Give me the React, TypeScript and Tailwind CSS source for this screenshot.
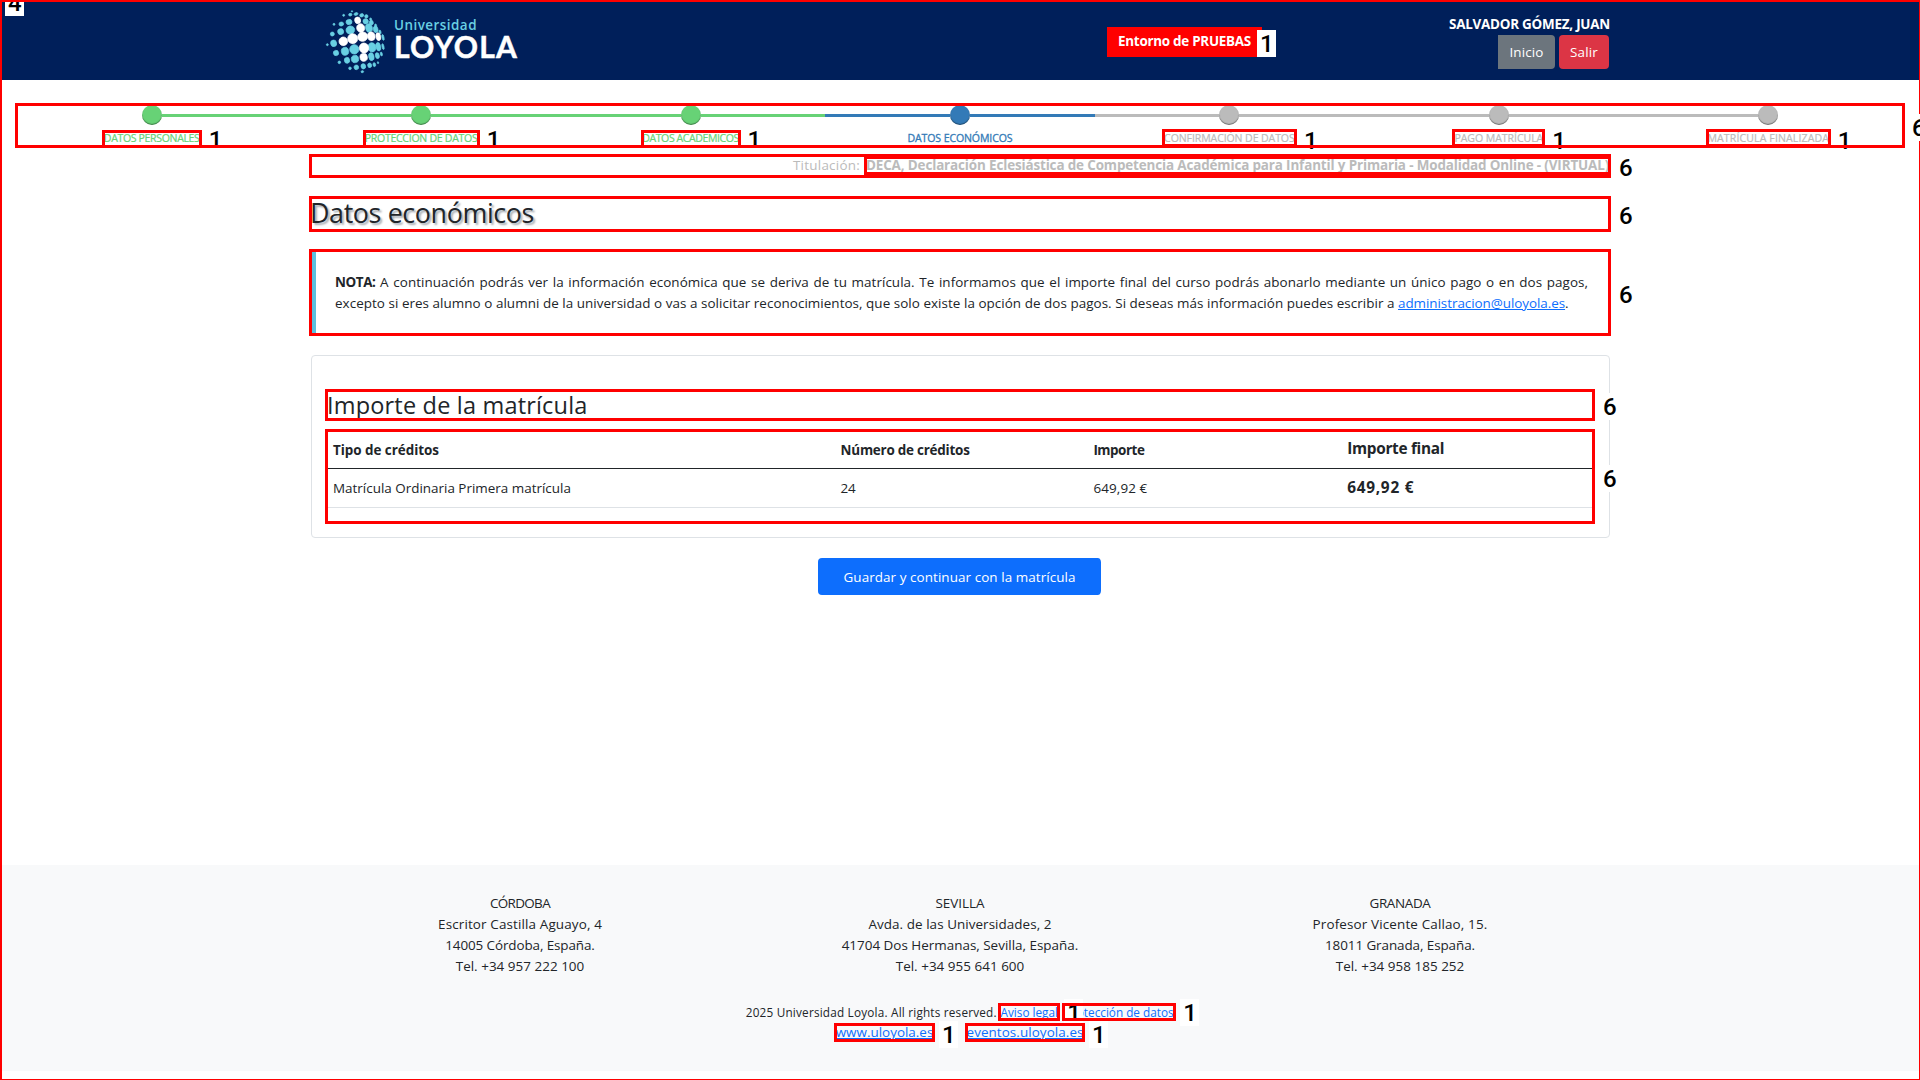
import type { ReactNode } from "react";

function Tag({ value, className = "" }: { value: string; className?: string }) {
  return (
    <span
      className={`absolute z-10 h-[27px] w-[19px] overflow-hidden bg-white pl-[3px] text-left font-['Roboto',sans-serif] text-[24px] leading-[28px] font-medium tracking-normal text-black ${className}`}
    >
      {value}
    </span>
  );
}

type MarkProps = { children?: ReactNode; className?: string; tag?: string; tagClass?: string };

function Mark({ children, className = "", tag, tagClass = "" }: MarkProps) {
  return (
    <div className={`relative shrink-0 ${className}`}>
      {children}
      <span className="pointer-events-none absolute inset-0 z-20 border-[3px] border-[#ff0000]" />
      {tag && (
        <Tag
          value={tag}
          className={`left-full ${tag === "6" ? "ml-[5px] top-[calc(50%-12px)]" : "ml-1 top-[calc(50%-12px)]"} ${tagClass}`}
        />
      )}
    </div>
  );
}

const whiteDots = [
  [113, 49, 9, 10], [122, 72, 12, 13], [70, 112, 13, 13], [98, 104, 15, 15], [128, 98, 15, 14],
  [154, 97, 11, 13], [175, 98, 7, 12], [132, 132, 14, 15], [131, 160, 11, 12],
];
const blueDots = [
  [96, 22, 2, 2], [71, 34, 3, 3], [91, 32, 5, 4], [108, 30, 6, 4], [125, 34, 6, 5], [139, 37, 5, 5], [152, 46, 3, 4],
  [42, 61, 3, 3], [64, 60, 7, 6], [87, 54, 9, 8], [137, 52, 8, 8], [154, 56, 6, 7], [167, 65, 3, 5],
  [37, 90, 6, 6], [62, 83, 9, 9], [91, 78, 13, 12], [147, 72, 10, 13], [167, 76, 7, 10], [180, 84, 3, 6],
  [22, 122, 3, 3], [41, 118, 9, 10], [189, 100, 3, 9],
  [48, 147, 8, 8], [75, 142, 11, 12], [103, 136, 14, 14], [156, 130, 12, 14], [175, 128, 7, 13], [189, 128, 3, 9],
  [58, 175, 4, 4], [81, 169, 8, 9], [105, 165, 11, 11], [154, 158, 8, 12], [172, 155, 6, 9], [184, 150, 3, 6],
  [90, 193, 4, 4], [109, 190, 7, 7], [130, 187, 7, 8], [149, 184, 6, 7], [163, 182, 4, 6], [174, 176, 2, 3],
  [127, 203, 4, 3],
];

function Logo() {
  return (
    <div className="flex h-full items-center">
      <svg width="72" height="72" viewBox="0 0 216 216" className="-ml-1.5 -mt-[1px]">
        {blueDots.map(([x, y, rx, ry]) => (
          <ellipse key={`${x}-${y}`} cx={x} cy={y} rx={rx} ry={ry} fill="#69d0e3" stroke="#69d0e3" strokeWidth="2" transform={`rotate(-12 ${x} ${y})`} />
        ))}
        {whiteDots.map(([x, y, rx, ry]) => (
          <ellipse key={`${x}-${y}`} cx={x} cy={y} rx={rx} ry={ry} fill="#fff" stroke="#fff" strokeWidth="2" transform={`rotate(-12 ${x} ${y})`} />
        ))}
      </svg>
      <div className="ml-[2px] -mt-[3px] whitespace-nowrap">
        <div className="text-[13.44px] leading-[16px] font-semibold tracking-[0.035em] text-[#69d0e3]">Universidad</div>
        <div className="-mt-[2px] font-['Lato',sans-serif] text-[30px] leading-[30px] font-bold tracking-[0.042em] text-white [-webkit-text-stroke:0.5px_white]">LOYOLA</div>
      </div>
    </div>
  );
}

const steps = [
  { label: "DATOS PERSONALES", state: "done", box: "w-[100px] tracking-[-0.026em]" },
  { label: "PROTECCION DE DATOS", state: "done", box: "w-[117px] tracking-[-0.021em]" },
  { label: "DATOS ACADEMICOS", state: "done", box: "w-[100px] tracking-[-0.032em]" },
  { label: "DATOS ECONÓMICOS", state: "current", box: "tracking-[-0.0105em]" },
  { label: "CONFIRMACIÓN DE DATOS", state: "todo", box: "w-[135px] tracking-[-0.0076em]" },
  { label: "PAGO MATRÍCULA", state: "todo", box: "w-[93px] tracking-[-0.0037em]" },
  { label: "MATRÍCULA FINALIZADA", state: "todo", box: "w-[125px] tracking-[0.0088em]" },
];
const fill: Record<string, string> = { done: "bg-[#67d276]", current: "bg-[#337ab7]", todo: "bg-[#bbbbbb]" };
const ink: Record<string, string> = { done: "text-[#67d276]", current: "text-[#337ab7]", todo: "text-[#bbbbbb]" };

function Stepper() {
  return (
    <Mark className="mx-auto mt-[23px] h-[45px] w-[1890px]">
      <div className="flex h-full px-[2px] pt-[2px]">
        {steps.map((s, i) => (
          <div key={s.label} className="flex flex-1 flex-col items-center">
            <div className="flex w-full items-center">
              <span className={`h-[3px] flex-1 ${i === 0 ? "" : fill[s.state]}`} />
              <span className={`size-5 rounded-full shadow-[inset_0_-1px_1px_rgba(0,0,0,0.4)] ${fill[s.state]}`} />
              <span className={`h-[3px] flex-1 ${i === 6 ? "" : fill[s.state]}`} />
            </div>
            {s.state === "current" ? (
              <div className={`mt-1 text-[10.56px] leading-[18px] whitespace-nowrap [-webkit-text-stroke:0.3px] ${ink[s.state]} ${s.box}`}>{s.label}</div>
            ) : (
              <Mark className={`h-[18px] ${s.state === "todo" ? "mt-1" : "mt-[5px]"} ${s.box}`} tag="1" tagClass={s.state === "todo" ? "mt-px" : "-mt-px"}>
                <div className={`flex justify-center text-[10.56px] whitespace-nowrap [-webkit-text-stroke:0.2px] ${s.state === "todo" ? "leading-[18px]" : "leading-[17px]"} ${ink[s.state]}`}>{s.label}</div>
              </Mark>
            )}
          </div>
        ))}
      </div>
    </Mark>
  );
}

const campuses = [
  [["CÓRDOBA", "tracking-[-0.049em]"], ["Escritor Castilla Aguayo, 4", "tracking-[0.01em]"], ["14005 Córdoba, España.", "tracking-[-0.0075em]"], ["Tel. +34 957 222 100", "tracking-[0.002em]"]],
  [["SEVILLA", ""], ["Avda. de las Universidades, 2", "tracking-[0.004em]"], ["41704 Dos Hermanas, Sevilla, España.", ""], ["Tel. +34 955 641 600", "tracking-[0.002em]"]],
  [["GRANADA", "tracking-[-0.026em]"], ["Profesor Vicente Callao, 15.", "tracking-[0.011em]"], ["18011 Granada, España.", "tracking-[-0.006em]"], ["Tel. +34 958 185 252", "tracking-[0.002em]"]],
];

const linkText = "text-[#0d6efd] underline";

export default function App() {
  return (
    <div className="relative flex h-[1080px] w-[1920px] flex-col overflow-hidden bg-white font-['Open_Sans',sans-serif] text-[13.44px] leading-[21px] text-[#212529]">
      <header className="h-20 shrink-0 bg-[#001f5a]">
        <div className="mx-auto flex h-full w-[1300px] pl-4">
          <div className="w-[781px]">
            <Logo />
          </div>
          <div className="relative mt-[27px] h-[30px] w-[155px] bg-[#ff0000] pl-[11px] leading-[28px] font-bold tracking-[-0.0202em] whitespace-nowrap text-white">
            Entorno de PRUEBAS
            <Tag value="1" className="top-[3px] left-[150px]" />
          </div>
          <div className="ml-auto flex flex-col items-end pt-[14px]">
            <div className="font-bold tracking-[-0.0178em] whitespace-nowrap text-white">SALVADOR GÓMEZ, JUAN</div>
            <div className="mr-px flex gap-1 text-white">
              <button className="h-[34px] w-[57px] rounded-r bg-[#6c757d] tracking-[0.009em]">Inicio</button>
              <button className="h-[34px] w-[50px] rounded bg-[#dc3545] tracking-[0.013em]">Salir</button>
            </div>
          </div>
        </div>
      </header>

      <Stepper />

      <main className="mx-auto w-[1302px]">
        <Mark className="mt-1.5 h-6" tag="6">
          <div className="flex justify-end text-[#bbbbbb]">
            <span className="mr-1 mt-px tracking-[0.018em]">Titulación:</span>
            <Mark className="mt-[2px] h-[19px] w-[747px] pl-[2px]">
              <div className="-mt-px font-bold tracking-[-0.0103em] whitespace-nowrap">
                DECA, Declaración Eclesiástica de Competencia Académica para Infantil y Primaria - Modalidad Online - (VIRTUAL)
              </div>
            </Mark>
          </div>
        </Mark>

        <Mark className="mt-[18px] h-9 pl-px" tag="6">
          <h1 className="text-[26.88px] leading-[34px] tracking-[-0.0145em] [text-shadow:2px_2px_2px_#a6acb3]">Datos económicos</h1>
        </Mark>

        <Mark className="mt-[17px] h-[87px] pl-[3px]" tag="6">
          <div className="h-full border-l-4 border-[#5bc0de] pt-[23px] pr-[23px] pl-[19px]">
            <p className="text-justify tracking-[0.0032em]">
              <b className="tracking-[-0.03em]">NOTA:</b> A continuación podrás ver la información económica que se deriva de tu matrícula. Te informamos que el importe
              final del curso podrás abonarlo mediante un único pago o en dos pagos, excepto si eres alumno o alumni de la universidad o vas
              a solicitar reconocimientos, que solo existe la opción de dos pagos. Si deseas más información puedes escribir a{" "}
              <a className={`${linkText} tracking-[-0.004em]`}>administracion@uloyola.es</a>.
            </p>
          </div>
        </Mark>

        <section className="mt-[19px] mr-px ml-[2px] h-[183px] rounded border border-[#dee2e6] px-[13px] pt-[33px]">
          <Mark className="h-8 w-[1270px] pl-[2px]" tag="6">
            <h2 className="text-[23.52px] leading-[32px] tracking-[0.0075em]">Importe de la matrícula</h2>
          </Mark>
          <Mark className="mt-2 h-[95px] w-[1270px] p-[3px]" tag="6">
            <div className="grid h-[37px] grid-cols-[2fr_1fr_1fr_1fr] border-b border-[#212529] pt-2 font-bold">
              <div className="pl-[5px] tracking-[-0.0024em]">Tipo de créditos</div>
              <div className="pl-[7px] tracking-[-0.017em]">Número de créditos</div>
              <div className="pl-[7px] tracking-[-0.0355em]">Importe</div>
              <div className="-mt-[2px] pl-2 text-[15.36px] tracking-[-0.019em]">Importe final</div>
            </div>
            <div className="grid h-[39px] grid-cols-[2fr_1fr_1fr_1fr] border-b border-[#dee2e6] pt-[9px]">
              <div className="pl-[5px]">Matrícula Ordinaria Primera matrícula</div>
              <div className="pl-[7px] tracking-[-0.013em]">24</div>
              <div className="pl-[7px] tracking-[0.0087em]">649,92 €</div>
              <div className="-mt-px pl-2 text-[15.36px] font-bold tracking-[0.048em]">649,92 €</div>
            </div>
          </Mark>
        </section>

        <button className="mx-auto mt-5 block h-[37px] w-[284px] border-r border-white rounded bg-[#0d6efd] bg-clip-padding pt-[2px] tracking-[0.0053em] text-white">
          Guardar y continuar con la matrícula
        </button>
      </main>

      <footer className="mt-auto mb-[9px] h-[206px] bg-[#f8f9fa] pt-7 text-center">
        <div className="mx-auto grid w-[1320px] grid-cols-3">
          {campuses.map((lines) => (
            <address key={lines[0][0]} className="not-italic">
              {lines.map(([text, tracking]) => (
                <div key={text} className={tracking}>{text}</div>
              ))}
            </address>
          ))}
        </div>
        <div className="mt-[26px] flex justify-center pl-[2px] text-[11.76px] leading-[18px] whitespace-nowrap">
          <span className="w-[252.5px] text-left tracking-[0.017em]">2025 Universidad Loyola. All rights reserved.</span>
          <Mark className="h-[18px] w-[62px]" tag="1" tagClass="-mt-px">
            <a className={linkText}>Aviso legal</a>
          </Mark>
          <Mark className="ml-[2px] h-[18px] w-[114px]" tag="1" tagClass="-mt-px">
            <a className={linkText}>Protección de datos</a>
          </Mark>
        </div>
        <div className="mt-[2px] flex justify-center gap-[30px] pr-px leading-[19px] whitespace-nowrap">
          <Mark className="h-[19px] w-[101px]" tag="1">
            <a className={linkText}>www.uloyola.es</a>
          </Mark>
          <Mark className="h-[19px] w-[120px]" tag="1">
            <a className={`${linkText} tracking-[0.005em]`}>eventos.uloyola.es</a>
          </Mark>
        </div>
      </footer>

      <span className="pointer-events-none absolute inset-0 z-30 border-t-2 border-r border-b border-l-2 border-[#ff0000]" />
      <Tag value="4" className="top-[-11px] left-[5px] !z-20" />
      <Tag value="6" className="top-[114px] left-[1909px] !z-30" />
    </div>
  );
}
